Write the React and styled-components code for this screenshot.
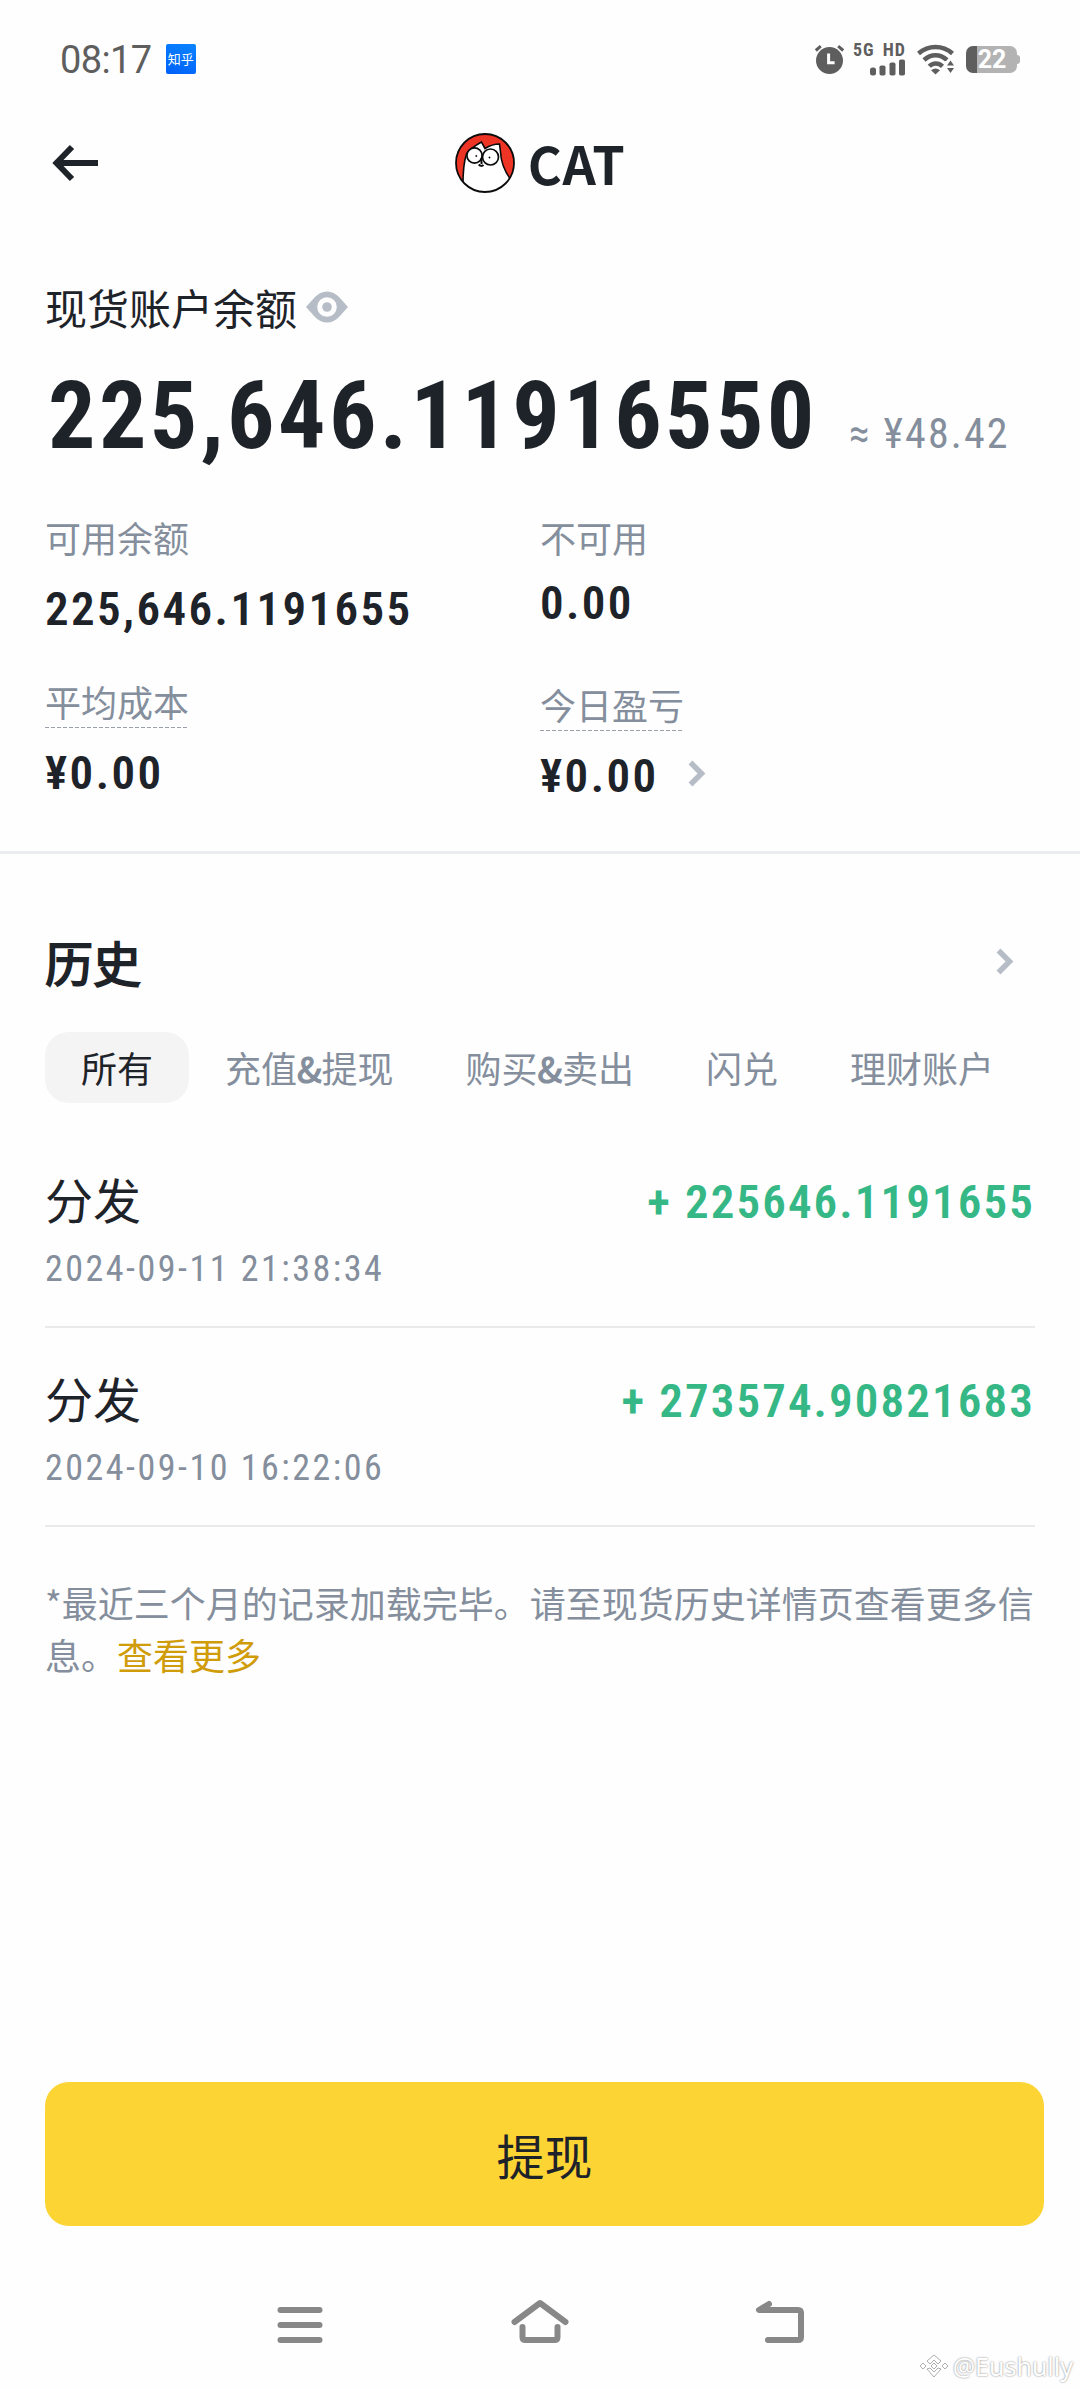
import React from 'react';
import styled, { createGlobalStyle } from 'styled-components';

const CJK = `'Noto Sans CJK SC', 'Noto Sans', sans-serif`;
const NUM = `Roboto, 'Noto Sans CJK SC', sans-serif`;
const INK = '#1e2329';
const MUTED = '#848e9c';

const Global = createGlobalStyle`
  * { box-sizing: border-box; }
  body { margin: 0; background: #fefefe; }
`;

const Screen = styled.div`
  position: relative;
  width: 1080px;
  height: 2388px;
  display: flex;
  flex-direction: column;
  overflow: hidden;
  background: #fefefe;
  color: ${INK};
  font-family: ${CJK};
  svg { display: block; flex: none; }
`;

const StatusBar = styled.div`
  height: 118px;
  padding: 0 60px 0 60px;
  display: flex;
  align-items: center;
  justify-content: space-between;
  color: #5e5e5e;
`;

const StatusGroup = styled.div`
  display: flex;
  align-items: center;
  gap: ${(p) => p.$gap}px;
`;

const Clock = styled.span`
  margin-top: 2px;
  font: 400 38px/44px ${NUM};
  letter-spacing: -0.6px;
`;

const AppBadge = styled.span`
  width: 30px;
  height: 30px;
  border-radius: 2px;
  background: linear-gradient(200deg, #0a84ff, #0060fa);
  color: #fff;
  font: 400 13px/30px ${CJK};
  text-align: center;
`;

const Network = styled.div`
  width: 50px;
  height: 33px;
  display: flex;
  flex-direction: column;
  align-items: flex-end;
  justify-content: space-between;
`;

const NetworkLabel = styled.span`
  font: 700 18px/14px ${NUM};
  font-stretch: 75%;
  letter-spacing: 1px;
  word-spacing: 3px;
  white-space: nowrap;
`;

const Battery = styled.div`
  width: 51px;
  height: 27px;
  border-radius: 7px;
  background: linear-gradient(90deg, #5e5e5e 11px, #b3b3b3 11px);
  color: #fff;
  font: 700 25px/28px ${NUM};
  text-align: center;
  padding-left: 1px;
`;

const BatteryWrap = styled.div`
  display: flex;
  align-items: center;
`;

const BatteryTip = styled.span`
  width: 3px;
  height: 9px;
  background: #b3b3b3;
  border-radius: 0 3px 3px 0;
`;

const Header = styled.header`
  height: 90px;
  padding: 0 52px;
  display: grid;
  grid-template-columns: 200px 1fr 200px;
  align-items: center;
`;

const Title = styled.h1`
  margin: 0;
  display: flex;
  align-items: center;
  justify-content: center;
  gap: 13px;
  font: 700 52px/60px ${CJK};
`;

const TitleText = styled.span`
  display: block;
  letter-spacing: 0.5px;
`;

const Balance = styled.section`
  padding: 69px 45px 0;
  height: 643px;
`;

const LabelRow = styled.div`
  display: flex;
  align-items: center;
  gap: 8px;
  height: 60px;
  font-size: 42px;
  line-height: 60px;
`;

const Total = styled.div`
  margin-top: 29px;
  display: flex;
  align-items: baseline;
  font-family: ${NUM};
  line-height: 100px;
  height: 100px;
  white-space: nowrap;
`;

const TotalValue = styled.span`
  width: 804px;
  padding-left: 3px;
  font-size: 94px;
  font-weight: 700;
  font-stretch: 75%;
  letter-spacing: 3.4px;
`;

const Approx = styled.span`
  color: ${MUTED};
  font-size: 42px;
  font-stretch: 75%;
  letter-spacing: 2.1px;
`;

const Stats = styled.div`
  margin-top: 46px;
  display: grid;
  grid-template-columns: 495px 1fr;
  align-items: start;
`;

const StatColumn = styled.div`
  display: flex;
  flex-direction: column;
  align-items: flex-start;
`;

const StatLabel = styled.span`
  margin-top: ${(p) => p.$top || 0}px;
  color: ${MUTED};
  font-size: 36px;
  line-height: 50px;
  height: ${(p) => (p.$dashed ? 52 : 50)}px;
  ${(p) => p.$dashed && `
    background: repeating-linear-gradient(90deg, #9aa1ac 0 4px, transparent 4px 6px) left bottom / 100% 1px no-repeat;
  `}
`;

const StatValue = styled.span`
  margin-top: ${(p) => p.$top}px;
  display: flex;
  align-items: center;
  gap: 30px;
  font: 600 47px/56px ${NUM};
  font-stretch: 75%;
  letter-spacing: 2.4px;
  svg { margin-bottom: 5px; }
`;

const Divider = styled.hr`
  width: 100%;
  height: 3px;
  margin: 0;
  border: 0;
  background: #eaecef;
`;

const History = styled.section`
  padding: 77px 45px 0;
`;

const HistoryHead = styled.div`
  display: flex;
  align-items: center;
  justify-content: space-between;
  height: 60px;
  padding-right: 21px;
`;

const HistoryTitle = styled.h2`
  margin: 0;
  font: 400 48px/60px ${CJK};
  -webkit-text-stroke: 1.8px ${INK};
`;

const Tabs = styled.nav`
  margin-top: 41px;
  display: flex;
`;

const Tab = styled.span`
  height: 71px;
  padding: 0 36px;
  border-radius: 24px;
  font-size: 36px;
  line-height: 71px;
  white-space: nowrap;
  color: ${(p) => (p.$active ? INK : MUTED)};
  background: ${(p) => (p.$active ? '#f4f4f4' : 'transparent')};
`;

const Ampersand = styled.span`
  -webkit-text-stroke: 1.2px ${MUTED};
`;

const Records = styled.div`
  margin-top: 26px;
`;

const Record = styled.div`
  height: 199px;
  padding-top: 39px;
  border-bottom: 2px solid #eaeaea;
  display: flex;
  justify-content: space-between;
  align-items: flex-start;
`;

const RecordInfo = styled.div`
  display: flex;
  flex-direction: column;
  gap: 20px;
`;

const RecordName = styled.span`
  font-size: 48px;
  line-height: 60px;
`;

const RecordDate = styled.span`
  color: ${MUTED};
  font: 400 36px/42px ${NUM};
  font-stretch: 75%;
  letter-spacing: 2.5px;
`;

const Amount = styled.span`
  margin-top: 4px;
  color: #35b886;
  font: 600 47px/60px ${NUM};
  font-stretch: 75%;
  letter-spacing: 2.1px;
`;

const Note = styled.p`
  margin: 49px -4px 0 0;
  color: ${MUTED};
  font-size: 36px;
  line-height: 52px;
`;

const More = styled.span`
  color: #d09c0a;
`;

const Action = styled.button`
  margin: auto 36px 0 45px;
  height: 144px;
  flex: none;
  border: 0;
  border-radius: 24px;
  background: #fcd535;
  color: ${INK};
  font: 400 48px/144px ${CJK};
  padding: 0;
`;

const SystemNav = styled.nav`
  height: 162px;
  flex: none;
  padding: 69px 180px 0;
  display: grid;
  grid-template-columns: repeat(3, 240px);
  justify-items: center;
  align-items: start;
`;

const Watermark = styled.div`
  position: absolute;
  right: 7px;
  bottom: 5px;
  display: flex;
  align-items: center;
  gap: 4px;
  color: #fff;
  font: 400 25px/34px 'Noto Sans', sans-serif;
  text-shadow: 0 0 2px #777;
`;

const AlarmIcon = () => (
  <svg width="31" height="31" viewBox="0 0 31 31">
    <circle cx="15.5" cy="16.5" r="13.5" fill="#5e5e5e" />
    <path d="M1.8 6.5 6.8 2.2M24.2 2.2l5 4.3" stroke="#5e5e5e" strokeWidth="3" fill="none" />
    <path d="M14.6 9.5v9.2h6" stroke="#fff" strokeWidth="3" fill="none" />
  </svg>
);

const SignalIcon = () => (
  <svg width="36" height="17" viewBox="0 0 36 17" fill="#5e5e5e">
    <rect x="0" y="8.5" width="6" height="8" rx="2.5" />
    <rect x="9.5" y="6.5" width="6" height="10" rx="1.8" />
    <rect x="19.5" y="3.5" width="6" height="13" rx="1.8" />
    <rect x="29" y="0.5" width="6" height="16" rx="1.8" />
  </svg>
);

const WifiIcon = () => (
  <svg width="38" height="31" viewBox="0 0 38 31">
    <g fill="none" stroke="#5e5e5e" strokeWidth="4.5">
      <path d="M1.5 9.5C11.5 0.8 25.5 0.8 35.5 9.5" />
      <path d="M7 16C14 9.5 23 9.5 30 16" />
      <path d="M12.3 22.3C16 18.5 21.5 18.5 25.5 22.3" />
    </g>
    <path d="M14 26.2q4.500-3.500 9 0L18.500 30.500z" fill="#5e5e5e" />
    <path d="M27.500 17h11v14h-11z" fill="#fefefe" />
    <path d="M30 21.500l3.500-5 3.500 5zM30 24l3.500 5 3.500-5z" fill="#5e5e5e" />
  </svg>
);

const BackIcon = () => (
  <svg width="48" height="40" viewBox="0 0 48 40">
    <path d="M46 20H6M20 4 4.500 20 20 36" fill="none" stroke={INK} strokeWidth="6" />
  </svg>
);

const CatLogo = () => (
  <svg width="60" height="60" viewBox="0 0 60 60" stroke="#0b0b0b">
    <defs>
      <clipPath id="coin"><circle cx="30" cy="30" r="29" /></clipPath>
    </defs>
    <circle cx="30" cy="30" r="29" fill="#ee3424" stroke="none" />
    <g clipPath="url(#coin)">
      <path
        d="M8 62C8 48 7 34 11.500 21C15 15.500 22 11.500 26.500 9L30 15.500C34 13 39 11 44.500 11L45.500 19C46 30 50 39 56 47L60 62Z"
        fill="#fff"
        strokeWidth="1.600"
      />
    </g>
    <circle cx="19.500" cy="22.500" r="7.600" fill="#fff" strokeWidth="1.700" />
    <circle cx="35.500" cy="24" r="8" fill="#fff" strokeWidth="1.700" />
    <circle cx="21.300" cy="23" r="0.700" fill="#000" strokeWidth="0.500" />
    <circle cx="34.500" cy="24.500" r="0.700" fill="#000" strokeWidth="0.500" />
    <path d="M26.500 25v6M23.700 31.500q2.800 2.600 4.800 0.300" fill="none" strokeWidth="2" />
    <circle cx="30" cy="30" r="29" fill="none" strokeWidth="1.800" />
  </svg>
);

const EyeIcon = () => (
  <svg width="44" height="32" viewBox="0 0 44 32">
    <path
      d="M1 16L9.500 6.500Q15 0.500 22 0.500T34.500 6.500L43 16L34.500 25.500Q29 31.500 22 31.500T9.500 25.500Z"
      fill="#b7bdc6"
    />
    <circle cx="22" cy="16" r="7.300" fill="#b7bdc6" stroke="#fefefe" strokeWidth="5" />
  </svg>
);

const Chevron = () => (
  <svg width="18" height="27" viewBox="0 0 18 27">
    <path d="M2.500 2.500 13.500 13.500 2.500 24.500" fill="none" stroke="#b7bdc6" strokeWidth="5.500" />
  </svg>
);

const MenuIcon = () => (
  <svg width="60" height="60" viewBox="0 0 60 60">
    <path d="M10.500 15h39M10.500 30h39M10.500 45h39" stroke="#888" strokeWidth="6" strokeLinecap="round" />
  </svg>
);

const HomeIcon = () => (
  <svg width="60" height="60" viewBox="0 0 60 60" fill="none" stroke="#888" strokeWidth="6" strokeLinecap="round" strokeLinejoin="round">
    <path d="M4.500 27 30 8 55.500 27" />
    <path d="M12.500 32v10q0 3 3 3h29q3 0 3-3V32" />
  </svg>
);

const ReturnIcon = () => (
  <svg width="60" height="60" viewBox="0 0 60 60" fill="none" stroke="#888" strokeWidth="6" strokeLinecap="round" strokeLinejoin="round">
    <path d="M19 9 9 15H48q3 0 3 3v24q0 3-3 3H18" />
  </svg>
);

const MarkIcon = () => (
  <svg width="30" height="26" viewBox="0 0 30 26" fill="#fff" stroke="#999" strokeWidth="0.800">
    <path d="M15 2l7 6-3 3-4-4-4 4-3-3zM4 10l3 3-3 3-3-3zM26 10l3 3-3 3-3-3zM15 10l3 3-3 3-3-3zM8 16l3-1 4 4 4-4 3 1-7 8z" />
  </svg>
);

const tabs = [['所有'], ['充值', '提现'], ['购买', '卖出'], ['闪兑'], ['理财账户']];

const records = [
  { name: '分发', date: '2024-09-11 21:38:34', amount: '+ 225646.1191655' },
  { name: '分发', date: '2024-09-10 16:22:06', amount: '+ 273574.90821683' },
];

export default function App() {
  return (
    <Screen lang="zh-CN">
      <Global />
      <StatusBar>
        <StatusGroup $gap={14}>
          <Clock>08:17</Clock>
          <AppBadge>知乎</AppBadge>
        </StatusGroup>
        <StatusGroup $gap={11}>
          <AlarmIcon />
          <Network>
            <NetworkLabel>5G HD</NetworkLabel>
            <SignalIcon />
          </Network>
          <WifiIcon />
          <BatteryWrap>
            <Battery>22</Battery>
            <BatteryTip />
          </BatteryWrap>
        </StatusGroup>
      </StatusBar>

      <Header>
        <BackIcon />
        <Title>
          <CatLogo />
          <TitleText>CAT</TitleText>
        </Title>
      </Header>

      <Balance>
        <LabelRow>
          <span>现货账户余额</span>
          <EyeIcon />
        </LabelRow>
        <Total>
          <TotalValue>225,646.11916550</TotalValue>
          <Approx>≈ ¥48.42</Approx>
        </Total>
        <Stats>
          <StatColumn>
            <StatLabel>可用余额</StatLabel>
            <StatValue $top={19}>225,646.1191655</StatValue>
            <StatLabel $top={39} $dashed>平均成本</StatLabel>
            <StatValue $top={17}>¥0.00</StatValue>
          </StatColumn>
          <StatColumn>
            <StatLabel>不可用</StatLabel>
            <StatValue $top={13}>0.00</StatValue>
            <StatLabel $top={48} $dashed>今日盈亏</StatLabel>
            <StatValue $top={17}>
              ¥0.00
              <Chevron />
            </StatValue>
          </StatColumn>
        </Stats>
      </Balance>

      <Divider />

      <History>
        <HistoryHead>
          <HistoryTitle>历史</HistoryTitle>
          <Chevron />
        </HistoryHead>
        <Tabs>
          {tabs.map(([first, second], i) => (
            <Tab key={first} $active={i === 0}>
              {first}
              {second && <Ampersand>&amp;</Ampersand>}
              {second}
            </Tab>
          ))}
        </Tabs>
        <Records>
          {records.map((r) => (
            <Record key={r.date}>
              <RecordInfo>
                <RecordName>{r.name}</RecordName>
                <RecordDate>{r.date}</RecordDate>
              </RecordInfo>
              <Amount>{r.amount}</Amount>
            </Record>
          ))}
        </Records>
        <Note>
          *最近三个月的记录加载完毕。请至现货历史详情页查看更多信息。<More>查看更多</More>
        </Note>
      </History>

      <Action>提现</Action>

      <SystemNav>
        <MenuIcon />
        <HomeIcon />
        <ReturnIcon />
      </SystemNav>

      <Watermark>
        <MarkIcon />
        @Eushully
      </Watermark>
    </Screen>
  );
}
